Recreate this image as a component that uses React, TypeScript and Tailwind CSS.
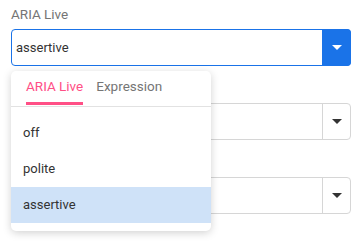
import React from "react";

// labels of the fields under the open menu are hidden by it, so left empty
const FIELDS = [
  { label: "ARIA Live", value: "assertive", open: true },
  { label: "", value: "", open: false },
  { label: "", value: "", open: false },
];

const OPTIONS = ["off", "polite", "assertive"];

function Caret({ className }: { className: string }) {
  return (
    <svg width="10" height="5" viewBox="0 0 10 5" className={className}>
      <path d="M0 0 L10 0 L5 5 Z" fill="currentColor" />
    </svg>
  );
}

export default function App() {
  return (
    <div className="relative w-[361px] h-[242px] bg-white px-[11px] pt-[4px] font-['Roboto',sans-serif] overflow-hidden">
      {FIELDS.map((f, i) => (
        <div key={i} className="mb-[12px] w-[340px]">
          <div className="h-[20px] leading-[20px] text-[13.5px] text-[#757575]">{f.label}</div>
          <div
            className={
              "mt-[5px] h-[37px] flex rounded-[4px] border " +
              (f.open ? "border-[#1a73e8]" : "border-[#d6d6d6]")
            }
          >
            <div className="flex-1 flex items-center pl-[4px] text-[13px] text-[#333]">{f.value}</div>
            {f.open ? (
              <div className="w-[29px] -my-px -mr-px bg-[#1a73e8] rounded-r-[4px] flex items-center justify-center">
                <Caret className="text-white" />
              </div>
            ) : (
              <div className="w-[28px] border-l border-[#d6d6d6] flex items-center justify-center">
                <Caret className="text-[#333]" />
              </div>
            )}
          </div>
        </div>
      ))}

      {/* dropdown */}
      <div className="absolute left-[11px] top-[71px] w-[200px] bg-white rounded-[5px] shadow-[0_2px_8px_rgba(0,0,0,0.18)]">
        <div className="flex gap-[13px] pl-[15px] h-[36px] border-b border-[#e2e2e2]">
          <div className="relative pt-[7px] leading-[16px] text-[13.5px] text-[#ff4f86]">
            ARIA Live
            <div className="absolute left-0 right-0 top-[31px] h-[3px] bg-[#ff4f86]" />
          </div>
          <div className="pt-[7px] leading-[16px] text-[13.5px] text-[#757575]">Expression</div>
        </div>
        <div className="py-[8px]">
          {OPTIONS.map(o => (
            <div
              key={o}
              className={
                "h-[36px] flex items-center pl-[12px] text-[13px] text-[#333] " +
                (o === "assertive" ? "bg-[#cfe2f8]" : "")
              }
            >
              {o}
            </div>
          ))}
        </div>
      </div>
    </div>
  );
}
